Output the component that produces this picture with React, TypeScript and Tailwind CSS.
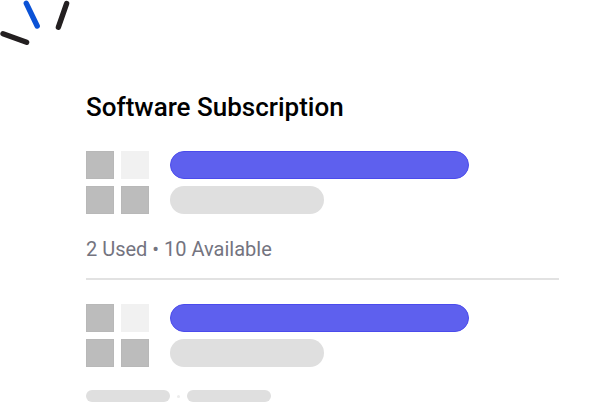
function Sparks() {
  return (
    <svg aria-hidden="true" width="80" height="48" viewBox="0 0 80 48" fill="none" strokeLinecap="round" strokeWidth="5.4">
      <path d="M26.3 3.3 37.2 26" stroke="#0b52d6" />
      <path d="M66.6 3.6 58.4 27.2" stroke="#231f20" />
      <path d="M3 33.7 26.6 42.3" stroke="#231f20" />
    </svg>
  );
}

function ProductSkeleton() {
  return (
    <div className="flex gap-[21px]">
      <div className="grid shrink-0 grid-cols-[28px_28px] grid-rows-[28px_28px] gap-[7px]">
        <div className="border border-[#b8b8b8] bg-[#bcbcbc]" />
        <div className="bg-[#f1f1f1]" />
        <div className="border border-[#b8b8b8] bg-[#bcbcbc]" />
        <div className="border border-[#b8b8b8] bg-[#bcbcbc]" />
      </div>
      <div className="flex grow flex-col gap-[7px]">
        <div className="h-7 w-full max-w-[299px] rounded-full border border-[#4b4bec] bg-[#5e60ee]" />
        <div className="h-7 w-full max-w-[154px] rounded-full bg-[#dfdfdf]" />
      </div>
    </div>
  );
}

export default function App() {
  return (
    <div className="bg-white font-['Roboto',sans-serif]">
      <header className="flex">
        <Sparks />
      </header>
      <main className="pt-[43px] pr-[47px] pl-[86px]">
        <h1 className="mb-7 text-[26px] leading-8 font-medium text-black">Software Subscription</h1>
        <section className="border-b-2 border-[#e2e2e2] pb-[15px]">
          <ProductSkeleton />
          <p className="mt-[21px] text-[20px] leading-7 text-[#74747f]">2 Used • 10 Available</p>
        </section>
        <section className="pt-6">
          <ProductSkeleton />
          <div className="mt-[23px] flex items-center gap-[7px]">
            <div className="h-3 w-[84px] rounded-full bg-[#dfdfdf]" />
            <div className="size-[3px] rounded-full bg-[#ececec]" />
            <div className="h-3 w-[84px] rounded-full bg-[#dfdfdf]" />
          </div>
        </section>
      </main>
    </div>
  );
}
